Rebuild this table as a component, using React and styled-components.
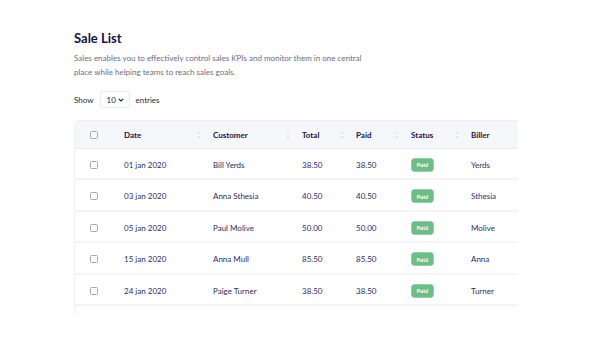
import styled, { createGlobalStyle } from "styled-components";

const Global = createGlobalStyle`
  body {
    margin: 0;
    background: #ffffff;
    font-family: Lato, "Open Sans", sans-serif;
  }
`;

const Page = styled.div`
  padding: 30px 0 0 74px;
  width: 590px;
  height: 360px;
  box-sizing: border-box;
  overflow: hidden;
`;

const Title = styled.h1`
  margin: 0;
  font-size: 13px;
  font-weight: 700;
  color: #12124a;
  line-height: 16px;
`;

const Intro = styled.p`
  margin: 5px 0 0;
  width: 300px;
  font-size: 8px;
  line-height: 14px;
  color: #6d6d82;
`;

const Length = styled.div`
  display: flex;
  align-items: center;
  gap: 6px;
  margin-top: 12px;
  font-size: 8px;
  color: #2b2b3e;
`;

const Select = styled.div`
  display: flex;
  align-items: center;
  justify-content: space-between;
  box-sizing: border-box;
  width: 30px;
  height: 17px;
  padding: 0 5px 0 6px;
  border: 1px solid #ececf2;
  border-radius: 2px;
  color: #1e1e3c;
  font-size: 8px;
`;

const Card = styled.div`
  margin-top: 12px;
  width: 444px;
  height: 195px;
  overflow: hidden;
  border-left: 1px solid #eeeef5;
  border-top: 1px solid #eeeef5;
  border-radius: 6px 0 0 0;
  box-sizing: border-box;
`;

const Table = styled.table`
  border-collapse: collapse;
  table-layout: fixed;
  width: 443px;
  font-size: 8px;
  color: #2c2a6b;
`;

const Head = styled.th`
  box-sizing: border-box;
  width: ${(p) => p.$w}px;
  height: 27px;
  padding: 1px ${(p) => (p.$check ? 0 : 12)}px 0 0;
  background: #f6f7fb;
  text-align: left;
  font-weight: 700;
  color: #16164c;
  border-bottom: 1px solid #ececf4;
`;

const HeadInner = styled.div`
  display: flex;
  align-items: center;
  justify-content: space-between;
`;

const Cell = styled.td`
  height: 26.5px;
  padding: 3px 0 0;
  border-bottom: 2px solid #f3f3f8;
  white-space: nowrap;
`;

const CheckCell = styled.div`
  display: flex;
  justify-content: flex-start;
  padding-left: 15px;
`;

const Box = styled.span`
  display: block;
  width: 6px;
  height: 6px;
  border: 1px solid #a8a8b4;
  border-radius: 1.5px;
`;

const Badge = styled.span`
  display: inline-block;
  padding: 2.5px 4.5px;
  background: #6cbd86;
  border: 1px solid #8fd0a4;
  border-radius: 3.5px;
  color: #ffffff;
  font-size: 6px;
  font-weight: 700;
  line-height: 7px;
`;

const Sort = () => (
  <svg width="4" height="8" viewBox="0 0 4 8">
    <path d="M2 0.5 L3.6 3 H0.4 Z" fill="#e2e2ea" />
    <path d="M2 7.5 L3.6 5 H0.4 Z" fill="#e2e2ea" />
  </svg>
);

const Chevron = () => (
  <svg width="6" height="4" viewBox="0 0 6 4">
    <path d="M0.8 0.8 L3 3 L5.2 0.8" stroke="#222" strokeWidth="1.1" fill="none" />
  </svg>
);

const columns = [
  { key: "date", label: "Date", w: 89 },
  { key: "customer", label: "Customer", w: 89 },
  { key: "total", label: "Total", w: 54 },
  { key: "paid", label: "Paid", w: 55 },
  { key: "status", label: "Status", w: 60 },
  { key: "biller", label: "Biller", w: 47, last: true },
];

const rows = [
  { date: "01 jan 2020", customer: "Bill Yerds", total: "38.50", paid: "38.50", biller: "Yerds" },
  { date: "03 jan 2020", customer: "Anna Sthesia", total: "40.50", paid: "40.50", biller: "Sthesia" },
  { date: "05 jan 2020", customer: "Paul Molive", total: "50.00", paid: "50.00", biller: "Molive" },
  { date: "15 jan 2020", customer: "Anna Mull", total: "85.50", paid: "85.50", biller: "Anna" },
  { date: "24 jan 2020", customer: "Paige Turner", total: "38.50", paid: "38.50", biller: "Turner" },
  { date: "28 jan 2020", customer: "Bob Frapples", total: "30.50", paid: "30.50", biller: "Frapples" },
];

const App = () => (
  <>
    <Global />
    <Page>
      <Title>Sale List</Title>
      <Intro>
        Sales enables you to effectively control sales KPIs and monitor them in one central
        place while helping teams to reach sales goals.
      </Intro>
      <Length>
        Show
        <Select>
          10 <Chevron />
        </Select>
        entries
      </Length>
      <Card>
        <Table>
          <thead>
            <tr>
              <Head $w={49} $check>
                <CheckCell>
                  <Box />
                </CheckCell>
              </Head>
              {columns.map((c) => (
                <Head key={c.key} $w={c.w}>
                  <HeadInner>
                    {c.label}
                    {!c.last && <Sort />}
                  </HeadInner>
                </Head>
              ))}
            </tr>
          </thead>
          <tbody>
            {rows.map((r) => (
              <tr key={r.date}>
                <Cell>
                  <CheckCell>
                    <Box />
                  </CheckCell>
                </Cell>
                <Cell>{r.date}</Cell>
                <Cell>{r.customer}</Cell>
                <Cell>{r.total}</Cell>
                <Cell>{r.paid}</Cell>
                <Cell>
                  <Badge>Paid</Badge>
                </Cell>
                <Cell>{r.biller}</Cell>
              </tr>
            ))}
          </tbody>
        </Table>
      </Card>
    </Page>
  </>
);

export default App;
